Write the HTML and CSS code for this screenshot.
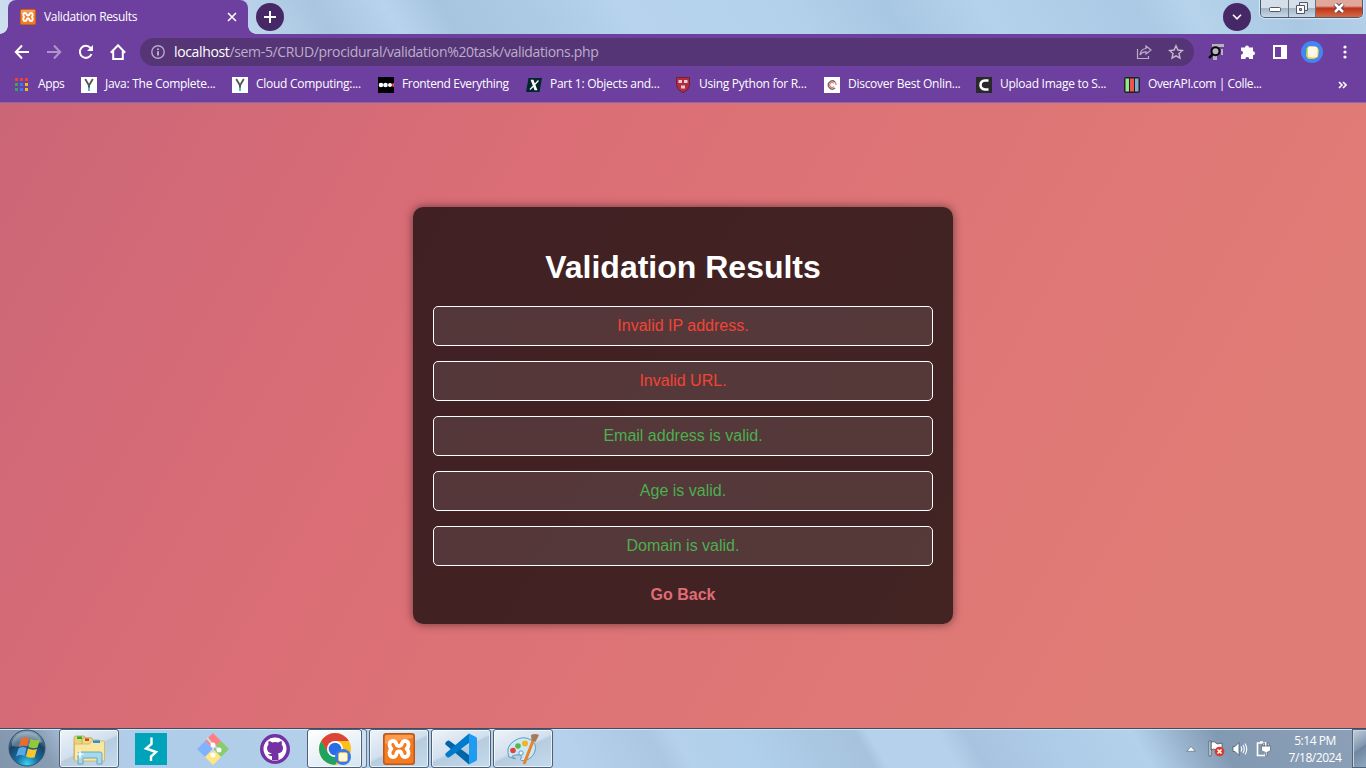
FILE: index.html
```html
<!DOCTYPE html>
<html lang="en">
<head>
<meta charset="utf-8">
<title>Validation Results</title>
<link rel="stylesheet" href="styles.css">
</head>
<body>
<svg class="defs" width="0" height="0">
  <defs>
    <symbol id="xampp" viewBox="0 0 32 32">
      <rect width="32" height="32" rx="3" fill="#b9591a"/>
      <rect x="1.500" y="1.500" width="29" height="29" rx="2" fill="#f47b20"/>
      <path d="M2 4Q2 2 4 2H28Q30 2 30 4V5Q16 7 2 11Z" fill="#fb9b50"/>
      <path d="M13 10Q12 8 9.500 8Q6.500 8.500 6.500 11.500Q6.500 14 8.500 15.800Q6.500 17 6.500 20.500Q7 24 10 24Q13 24 13.500 20.500Q14 18.500 16 18.500Q18 18.500 18.500 20.500Q19 24 22 24Q25 24 25.500 20.500Q25.500 17 23.500 15.800Q25.500 14 25.500 11.500Q25.500 8.500 22.500 8Q20 8 19 10Q18.500 13 16 13Q13.500 13 13 10Z" fill="none" stroke="#fff" stroke-width="3.800" stroke-linejoin="round"/>
    </symbol>
    <symbol id="yfav" viewBox="0 0 16 16">
      <rect width="16" height="16" fill="#fff"/>
      <path d="M4.200 2L8 8.500L11.800 2" fill="none" stroke="#555" stroke-width="1.800"/>
      <path d="M8 7.500v3.500" stroke="#555" stroke-width="2"/><path d="M8 10.500V14" stroke="#4cb8d8" stroke-width="2"/>
    </symbol>
  </defs>
</svg>
<div class="screen">
  <header class="titlebar">
    <div class="tab">
      <svg class="tab-icon" width="16" height="16"><use href="#xampp"/></svg>
      <span class="tab-title">Validation Results</span>
      <svg class="tab-close" width="10" height="10" viewBox="0 0 10 10"><path d="M1 1l8 8M9 1l-8 8" stroke="#fff" stroke-width="1.600"/></svg>
    </div>
    <div class="round-btn new-tab"><svg width="12" height="12" viewBox="0 0 12 12"><path d="M6 0v12M0 6h12" stroke="#fff" stroke-width="2"/></svg></div>
    <div class="round-btn tab-search"><svg width="10" height="6" viewBox="0 0 10 6"><path d="M1 .8L5 4.800L9 .8" fill="none" stroke="#fff" stroke-width="1.600"/></svg></div>
    <div class="window-controls">
      <span class="wc min"><svg width="12" height="6" viewBox="0 0 12 6"><rect x=".5" y=".5" width="11" height="4" rx="1" fill="#fff" stroke="#535666"/></svg></span>
      <span class="wc max"><svg width="12" height="12" viewBox="0 0 12 12"><path d="M3.500.5h8v8h-8z" fill="#eee" stroke="#535666"/><path d="M.5 3.500h8v8h-8z" fill="#fff" stroke="#535666"/><path d="M3.500 6.500h2v2h-2z" fill="#9aabc0" stroke="#535666"/></svg></span>
      <span class="wc close"><svg width="12" height="10" viewBox="0 0 12 10"><path d="M2 1l8 8M10 1l-8 8" stroke="#59424a" stroke-width="4.500"/><path d="M2 1l8 8M10 1l-8 8" stroke="#fff" stroke-width="2.500"/></svg></span>
    </div>
  </header>

  <div class="toolbar">
    <div class="nav">
      <svg width="16" height="16" viewBox="0 0 16 16"><path d="M15 8H2M8 1.500L1.800 8L8 14.500" fill="none" stroke="#fff" stroke-width="2"/></svg>
      <svg width="16" height="16" viewBox="0 0 16 16" opacity=".45"><path d="M1 8h13M8 1.500L14.200 8L8 14.500" fill="none" stroke="#fff" stroke-width="2"/></svg>
      <svg width="16" height="16" viewBox="0 0 16 16"><path d="M13.500 10A6 6 0 1 1 12.500 4L14 5.500" fill="none" stroke="#fff" stroke-width="2"/><path d="M15 1v6H9z" fill="#fff"/></svg>
      <svg width="16" height="16" viewBox="0 0 16 16"><path d="M.8 8.700L8 1.300L15.200 8.700M3.200 7V15H12.800V7" fill="none" stroke="#fff" stroke-width="2"/></svg>
    </div>
    <div class="omnibox">
      <svg width="14" height="14" viewBox="0 0 14 14"><circle cx="7" cy="7" r="6.200" fill="none" stroke="#b9a8cd" stroke-width="1.400"/><path d="M7 6.200V10.500M7 3.500V5" stroke="#d5cade" stroke-width="1.600"/></svg>
      <span class="url"><b>localhost</b>/sem-5/CRUD/procidural/validation%20task/validations.php</span>
      <svg class="share" width="16" height="16" viewBox="0 0 16 16"><path d="M1.500 5v9.500h11V12M10 2l5 4-5 4V7.800Q6 7.500 4 11Q4.500 5 10 4.500Z" fill="none" stroke="#bbaec9" stroke-width="1.200"/></svg>
      <svg class="star" width="16" height="16" viewBox="0 0 16 16"><path d="M8 1.800l1.900 4.200 4.600.5-3.500 3.100 1 4.500L8 11.800l-4 2.300 1-4.500L1.500 6.500l4.600-.5z" fill="none" stroke="#c5bad1" stroke-width="1.400"/></svg>
    </div>
    <div class="extensions">
      <svg width="16" height="16" viewBox="0 0 16 16"><path d="M4 0h12v3H4zM13 5h2v6h-2zM5 10h4v6H5z" fill="#b6b2bd"/><circle cx="7.500" cy="7.300" r="4" fill="#b9b6c2" stroke="#080808" stroke-width="2"/><path d="M4.500 10.500L1 14" stroke="#080808" stroke-width="2.400"/></svg>
      <svg width="16" height="16" viewBox="0 0 16 16"><path d="M2 3.500h3a2 2 0 0 1 4 0h4v3.800a2 2 0 0 1 0 4V15H9.300a2 2 0 0 0-4 0H1v-4.200a2 2 0 0 0 0-4V3.500z" fill="#fff"/></svg>
      <svg width="16" height="16" viewBox="0 0 16 16"><path d="M1 1h14v14H1zM3 3v10h6V3z" fill="#fff" fill-rule="evenodd"/></svg>
      <svg class="avatar" width="22" height="22" viewBox="0 0 22 22"><circle cx="11" cy="11" r="11" fill="#4285f4"/><path d="M5 8l3-3 8 1 2 3-1 7-4 2H7l-2-3z" fill="#f5c927"/><path d="M5 8l2-3 2 1v11l-3-2z" fill="#6fc157"/><rect x="6.500" y="5.500" width="10" height="11" rx="2.500" fill="#fff8e8"/></svg>
      <svg width="4" height="14" viewBox="0 0 4 14"><circle cx="2" cy="2" r="1.600" fill="#fff"/><circle cx="2" cy="7" r="1.600" fill="#fff"/><circle cx="2" cy="12" r="1.600" fill="#fff"/></svg>
    </div>
  </div>

  <nav class="bookmarks">
    <a class="bm b0"><svg width="14" height="16" viewBox="0 0 14 16"><path d="M0 1h3v3H0zM5 1h3v3H5zM10 1h3v3h-3z" fill="#ea4335"/><path d="M0 6h3v3H0zM0 11h3v3H0z" fill="#34a853"/><path d="M5 6h3v3H5zM5 11h3v3H5z" fill="#2f80f5"/><path d="M10 6h3v3h-3zM10 11h3v3h-3z" fill="#fbbc04"/></svg><span>Apps</span></a>
    <a class="bm b1"><svg width="16" height="16"><use href="#yfav"/></svg><span>Java: The Complete...</span></a>
    <a class="bm b2"><svg width="16" height="16"><use href="#yfav"/></svg><span>Cloud Computing:...</span></a>
    <a class="bm b3"><svg width="16" height="16" viewBox="0 0 16 16"><rect width="16" height="16" fill="#000"/><circle cx="3" cy="8" r="2.300" fill="#fff"/><circle cx="7.500" cy="8" r="2.300" fill="#fff"/><circle cx="12" cy="8" r="2" fill="#fff"/><path d="M16 6a2 2 0 0 0 0 4z" fill="#f45"/></svg><span>Frontend Everything</span></a>
    <a class="bm b4"><svg width="16" height="16" viewBox="0 0 16 16"><path d="M2.500 1H16l-2.500 14H0z" fill="#02262b"/><path d="M5.500 3.500h1.500l3.500 9H9zM12.500 3.500L4 12.500" fill="#fff" stroke="#fff" stroke-width="1.300"/></svg><span>Part 1: Objects and...</span></a>
    <a class="bm b5"><svg width="16" height="16" viewBox="0 0 16 16"><path d="M1.500.5h13v8Q14 13 8 15.700Q2 13 1.500 8.500Z" fill="#b52a40" stroke="#6e2236"/><path d="M3.500 3h3.500v3H3.500zM9 3h3.500v3H9zM6 8.500h4v3H6z" fill="#ddd1d2"/></svg><span>Using Python for R...</span></a>
    <a class="bm b6"><svg width="16" height="16" viewBox="0 0 16 16"><rect width="16" height="16" fill="#fff"/><path d="M11 5A4 4 0 1 0 11 11" fill="none" stroke="#667" stroke-width="1.300"/><path d="M10 6.300A2.500 2.500 0 1 0 10 9.700M11 5a4 4 0 0 1 1 3" fill="none" stroke="#ed755f" stroke-width="1.200"/></svg><span>Discover Best Onlin...</span></a>
    <a class="bm b7"><svg width="16" height="16" viewBox="0 0 16 16"><rect width="16" height="16" fill="#292929"/><path d="M12.500 3.500H9Q4.500 4 4.500 8T9 12.500h3.500" fill="none" stroke="#fff" stroke-width="2.600"/></svg><span>Upload Image to S...</span></a>
    <a class="bm b8"><svg width="16" height="16" viewBox="0 0 16 16"><rect width="16" height="16" rx="2" fill="#222"/><path d="M1.500 1.500H5v13H1.500z" fill="#97e58e"/><path d="M6 1.500h4v13H6z" fill="#ef5350"/><path d="M11 1.500h3.500v13H11z" fill="#86a9d0"/></svg><span>OverAPI.com | Colle...</span></a>
    <svg class="more" width="9" height="8" viewBox="0 0 9 8"><path d="M1 1l3 3-3 3M5 1l3 3-3 3" fill="none" stroke="#fff" stroke-width="1.600"/></svg>
  </nav>

  <main class="page">
    <section class="container">
      <h1>Validation Results</h1>
      <p class="result error">Invalid IP address.</p>
      <p class="result error">Invalid URL.</p>
      <p class="result success">Email address is valid.</p>
      <p class="result success">Age is valid.</p>
      <p class="result success">Domain is valid.</p>
      <a class="back">Go Back</a>
    </section>
  </main>

  <footer class="taskbar">
    <div class="start">
      <svg width="38" height="38" viewBox="0 0 38 38">
        <defs><radialGradient id="orb" cx=".5" cy=".95" r=".9"><stop offset="0" stop-color="#35d5f5"/><stop offset=".35" stop-color="#176da0"/><stop offset=".7" stop-color="#194264"/><stop offset="1" stop-color="#7f9cb2"/></radialGradient></defs>
        <circle cx="19" cy="19" r="18" fill="url(#orb)" stroke="#33526d"/>
        <path d="M4 13Q8 3 19 3T34 13Q19 19 4 17Z" fill="#fff" opacity=".28"/>
        <path d="M13 10q4-3 8-.5l-2 8q-4-2-8 .5z" fill="#ef6b2c"/><path d="M22.500 10q4 2 9.500.5l-2.500 8q-5 1.500-9-.5z" fill="#93c83d"/><path d="M10.500 19.500q4-2.500 8-.5l-2 8q-4-2-8.500.5z" fill="#59a9e4"/><path d="M20 19.500q4 2 9 .5l-2.500 8.500q-5 1-8.500-1z" fill="#fbc62c"/>
      </svg>
    </div>
    <div class="task explorer active">
      <svg width="34" height="32" viewBox="0 0 34 32"><path d="M2 5Q2 3 4 3h8l2 2h6v22H2z" fill="#ecd27c" stroke="#c2a354" stroke-width=".8"/><path d="M10 7q0-2 2-2h7l2 2h6v20H10z" fill="#f1da89" stroke="#c2a354" stroke-width=".8"/><path d="M2.500 11h15l2-3h12q1 0 1 1v19h-30z" fill="#f9e7a0" stroke="#cdb163" stroke-width=".8"/><path d="M5 3.500h5v2.500H5z" fill="#23b52e"/><path d="M13 5.500h4V8h-4z" fill="#d24325"/><path d="M21 7.500h7V10h-7z" fill="#2592dc"/><path d="M6 31V21q0-2 2-2h20q2 0 2 2v10h-5v-6H11v6z" fill="#a7d9ed" stroke="#579cba" stroke-width=".8"/><path d="M8 16l1 4.500 4 .5-4 1L8 26.500 7 22l-4-1 4-.5z" fill="#fff"/></svg>
    </div>
    <div class="task plain">
      <svg width="32" height="32" viewBox="0 0 32 32"><rect width="32" height="32" fill="#00a4ba"/><path d="M16.500 4.500V11L11 15.500l10 3.500-5 4.500V28" fill="none" stroke="#fff" stroke-width="2.400"/></svg>
    </div>
    <div class="task plain">
      <svg width="32" height="32" viewBox="0 0 32 32"><path d="M8 8l8-8 8 8-8 8z" fill="#ff8080"/><path d="M8 8l8 8-8 8-8-8z" fill="#80b3ff"/><path d="M24 8l8 8-8 8-8-8z" fill="#87cd6b"/><path d="M16 16l8 8-8 8-8-8z" fill="#ffe680"/><path d="M10 5l6 7v10M16 12l6 5" fill="none" stroke="#cadced" stroke-width="2"/><circle cx="16" cy="12" r="2.500" fill="#fff"/><circle cx="16" cy="22" r="2.500" fill="#fff"/><circle cx="22" cy="17" r="2.500" fill="#fff"/></svg>
    </div>
    <div class="task plain">
      <svg width="30" height="30" viewBox="0 0 30 30"><circle cx="15" cy="15" r="15" fill="#7331a3"/><circle cx="15" cy="15" r="11.500" fill="#fff"/><path d="M12 26v-4q-3 .5-4-2 2 .5 4-.5-5-1-5-5.500 0-2 1.500-3.500-.5-2 .2-3.500 2 0 3.500 1.500 3-.8 6 0Q20 7 21.500 7q.8 2 .2 3.500Q23 12 23 14q0 4.500-5 5.500.5 1 .5 2.500v4z" fill="#7331a3"/></svg>
    </div>
    <div class="task chrome active">
      <svg width="34" height="34" viewBox="0 0 34 34"><circle cx="17" cy="17" r="16" fill="#fbc116"/><path d="M3.200 9A16 16 0 0 1 30.900 9H17L10 21z" fill="#db4437"/><path d="M3.200 9A16 16 0 0 0 17 33l7-12H10z" fill="#1da362"/><circle cx="17" cy="17" r="8" fill="#fff"/><circle cx="17" cy="17" r="6.300" fill="#286de8"/><circle cx="25" cy="25" r="8" fill="#3978e8"/><rect x="20.500" y="20.500" width="9" height="9" rx="2" fill="#fff8df" stroke="#e7c33a" stroke-width=".8"/></svg>
    </div>
    <div class="stack"></div>
    <div class="task active"><svg width="32" height="32"><use href="#xampp"/></svg></div>
    <div class="task active">
      <svg width="32" height="32" viewBox="0 0 32 32"><path d="M24 22L4 7.500Q2.500 7 1 9t0 3L24 31.500z" fill="#0065a9"/><path d="M24 10L4 24.500Q2.500 25 1 23t0-3L24 .5z" fill="#007acc"/><path d="M24 .5L31 4q1 .5 1 2v20q0 1.500-1 2l-7 3.500z" fill="#1f9cf0"/></svg>
    </div>
    <div class="task active">
      <svg width="34" height="34" viewBox="0 0 34 34"><path d="M3 25Q-1 15 8 9t17-1q6 4 4 11t-9 9-5-2-5-3-2 3-5-1z" fill="#cbe8f7" stroke="#609cc0"/><circle cx="7" cy="18.500" r="2.800" fill="#e64338"/><circle cx="12" cy="14" r="2.800" fill="#58b747"/><circle cx="19" cy="11.500" r="3" fill="#f4b321"/><circle cx="15" cy="21" r="2.200" fill="#eef9ff" stroke="#609cc0"/><path d="M27 9L18 32" stroke="#e98329" stroke-width="3"/><path d="M25.500 8.500L25 3q4-2 8 0l-3.500 7z" fill="#a77b55"/></svg>
    </div>
    <div class="tray">
      <svg class="up" width="10" height="6" viewBox="0 0 10 6"><path d="M5 .5L9.300 5.300H.7z" fill="#fff" stroke="#5f7186" stroke-width=".7"/></svg>
      <svg class="flag" width="17" height="17" viewBox="0 0 17 17"><path d="M1 1h2v15H1zM3 2q4-1 5 1t6 0v8q-4 1-6-1t-5 0z" fill="#fff" stroke="#47566a" stroke-width=".8"/><circle cx="11.500" cy="11.500" r="4.800" fill="#d83a2e"/><path d="M9.500 9.500l4 4m0-4l-4 4" stroke="#fff" stroke-width="1.600"/></svg>
      <svg class="sound" width="16" height="16" viewBox="0 0 16 16"><path d="M1 5.500h2L7 1.500v13l-4-4H1z" fill="#fff" stroke="#47566a" stroke-width=".8"/><path d="M9 5.500q1.500 2.500 0 5M11 4q2.500 4 0 8M13 2.500q3.500 5.500 0 11" fill="none" stroke="#fff" stroke-width="1.100"/></svg>
      <svg class="power" width="15" height="16" viewBox="0 0 15 16"><path d="M1.500 2h8v12.500h-8z" fill="#8496aa" stroke="#fff" stroke-width="1.600"/><path d="M4 .3h3v1.500H4z" fill="#fff"/><path d="M5.500 5h9v4q-.5 2-3.500 2.200V15H9.500v-3.800Q6 11 5.500 9zM7 2h1.500v3H7zM11.500 2H13v3h-1.500z" fill="#fff" stroke="#53657b" stroke-width=".7"/></svg>
      <div class="clock"><span>5:14 PM</span><span class="date">7/18/2024</span></div>
    </div>
    <div class="show-desktop"></div>
  </footer>
</div>
</body>
</html>
```
FILE: styles.css
```css
* { box-sizing: border-box; }
body { margin: 0; overflow: hidden; }
.defs { position: absolute; }
svg { display: block; flex: none; }
.screen {
  width: 1366px; height: 768px;
  display: flex; flex-direction: column;
  font-family: "Open Sans", "Noto Sans", sans-serif;
  font-size: 12px; color: #fff;
}
.titlebar {
  height: 34px; flex: none; display: flex; align-items: flex-start; padding-left: 8px;
  background: linear-gradient(58deg, #cfe0ef 0, #b9d3ea 8%, #c0d8ee 17%, #a9c5df 24%, #b8d3ed 29%, #a8c5df 33%, #adcbe5 40%, #b7d3ed 46%, #b4d1eb 58%, #a8c7e2 65%, #b4d2ec 72%, #abc9e4 83%, #b7d3ec 87%, #a9c8e1 94%, #b5d1e9 100%);
}
.tab {
  position: relative; width: 240px; height: 34px; background: #6d409f;
  border-radius: 8px 8px 0 0; display: flex; align-items: center; padding: 0 11px 0 12px;
}
.tab::before, .tab::after { content: ""; position: absolute; bottom: 0; width: 8px; height: 8px; }
.tab::before { left: -8px; background: radial-gradient(circle at 0 0, transparent 7.500px, #6d409f 8px); }
.tab::after { right: -8px; background: radial-gradient(circle at 100% 0, transparent 7.500px, #6d409f 8px); }
.tab-title { margin-left: 8px; letter-spacing: -.34px; white-space: nowrap; padding-bottom: 1px; }
.tab-close { margin-left: auto; }
.round-btn { width: 28px; height: 28px; border-radius: 50%; background: #472867; display: flex; align-items: center; justify-content: center; margin-top: 3px; }
.new-tab { margin-left: 8px; }
.tab-search { margin-left: auto; }
.window-controls {
  display: flex; width: 103px; height: 18px; margin: 0 3px 0 9px;
  border: 1px solid #4d5968; border-top: 0; border-radius: 0 0 5px 5px; overflow: hidden;
  box-shadow: 0 0 1px 1px #d9e8f5;
}
.wc { display: flex; align-items: center; justify-content: center; background: linear-gradient(#d4dfe9 0 45%, #a4b5c6 50%, #c7d8e8); border-right: 1px solid #66737f; }
.min { width: 28px; padding-top: 3px; }
.max { width: 27px; padding-bottom: 1px; }
.close { flex: 1; border: 0; background: linear-gradient(#dfa89a 0 35%, #bd341c 48%, #d36b43); padding-bottom: 2px; }

.toolbar { height: 34px; flex: none; background: #6d409f; display: flex; align-items: center; padding: 2px 0 0 14px; }
.nav { display: flex; gap: 16px; width: 126px; }
.omnibox { width: 1054px; height: 28px; border-radius: 14px; background: #553576; display: flex; align-items: center; padding: 0 10px 0 11px; }
.url { margin-left: 9px; font-size: 14px; letter-spacing: -.35px; color: #bcaecb; white-space: nowrap; padding-bottom: 1px; }
.url b { color: #fff; font-weight: 400; }
.share { margin-left: auto; }
.star { margin-left: 16px; }
.extensions { display: flex; align-items: center; margin-left: 14px; }
.extensions svg + svg { margin-left: 16px; }
.extensions .avatar { margin-left: 13px; }
.extensions .avatar + svg { margin-left: 20px; }

.bookmarks { height: 35px; flex: none; background: #6d409f; border-bottom: 1px solid #8965b2; display: flex; align-items: center; padding: 0 19px 1px 15px; }
.bm { display: flex; align-items: center; white-space: nowrap; letter-spacing: -.27px; flex: none; }
.bm span { margin-left: 8px; padding-bottom: 2px; }
.b0 { width: 66px; letter-spacing: -.4px; } .b0 span { margin-left: 9px; }
.b1 { width: 151px; } .b2 { width: 146px; }
.b3 { width: 148px; letter-spacing: -.35px; } .b4 { width: 149px; }
.b5 { width: 149px; } .b6 { width: 152px; } .b7 { width: 148px; }
.b8 { letter-spacing: -.4px; }
.more { margin-left: auto; }

.page {
  height: 625px; flex: none; display: flex; align-items: center; justify-content: center;
  background: linear-gradient(120deg, #cb6677 0, #db6e76 33%, #e07c76 85%, #e07c76 100%);
  font-family: "Liberation Sans", Arial, sans-serif; font-size: 16px;
}
.container {
  width: 540px; height: 417px; padding: 20px; text-align: center;
  background: rgba(0, 0, 0, .7); border-radius: 10px; box-shadow: 0 0 10px rgba(0, 0, 0, .5);
}
h1 { font-size: 32px; line-height: 37px; margin: 22px 0 20px; }
.result { height: 40px; margin: 0 0 15px; line-height: 18px; padding: 10px; border: 1px solid #fff; border-radius: 5px; background: rgba(255, 255, 255, .1); }
.error { color: #f44336; }
.success { color: #4caf50; }
.back { display: block; margin-top: 20px; line-height: 18px; font-weight: 700; color: #e06c75; }

.taskbar {
  height: 40px; flex: none; display: flex; border-top: 1px solid #3e4d60; box-shadow: inset 0 1px #d2e3f2;
  background: linear-gradient(60deg, #8196ad 0, #899db3 4%, #b2cce7 7%, #afcde9 15%, #b7d1e9 30%, #b5d1ec 42%, #abc7e1 48%, #b5d1ec 50%, #afcfea 55%, #a7c2dd 63%, #b5d1ec 64%, #b5d1ec 69%, #a8c3df 71%, #aecbe7 77%, #b4d1ec 83%, #8299b2 89%, #8ca1b8 100%);
}
.start { width: 59px; padding: 0 0 0 8px; }
.task { width: 60px; margin-right: 2px; height: 39px; display: flex; align-items: center; justify-content: center; }
.active { border: 1px solid #4e6074; border-radius: 3px; background: linear-gradient(155deg, #eef3fa 0, #d1dfed 48%, #b7ccdf 52%, #c4daed 100%); box-shadow: inset 0 0 0 1px rgba(255, 255, 255, .65); }
.chrome { width: 55px; margin-right: 0; background: linear-gradient(155deg, #fff, #d6e5f2); }
.stack { width: 5px; margin-right: 2px; border: 1px solid #66798c; border-left: 0; border-radius: 0 3px 3px 0; background: #cde0f1; }
.tray { margin-left: auto; display: flex; align-items: center; padding-right: 10px; }
.flag { margin-left: 12px; } .sound { margin-left: 7px; } .power { margin-left: 8px; }
.clock { display: flex; flex-direction: column; align-items: center; width: 54px; margin-left: 17px; line-height: 17px; letter-spacing: -.45px; padding-top: 1px; white-space: nowrap; }
.show-desktop { width: 14px; border: 1px solid #52647a; border-right: 0; background: linear-gradient(145deg, #c3d0dd, #8196af 48%, #6e879f 52%, #90a8bf); box-shadow: inset 1px 1px #c5d4e2; }
```
